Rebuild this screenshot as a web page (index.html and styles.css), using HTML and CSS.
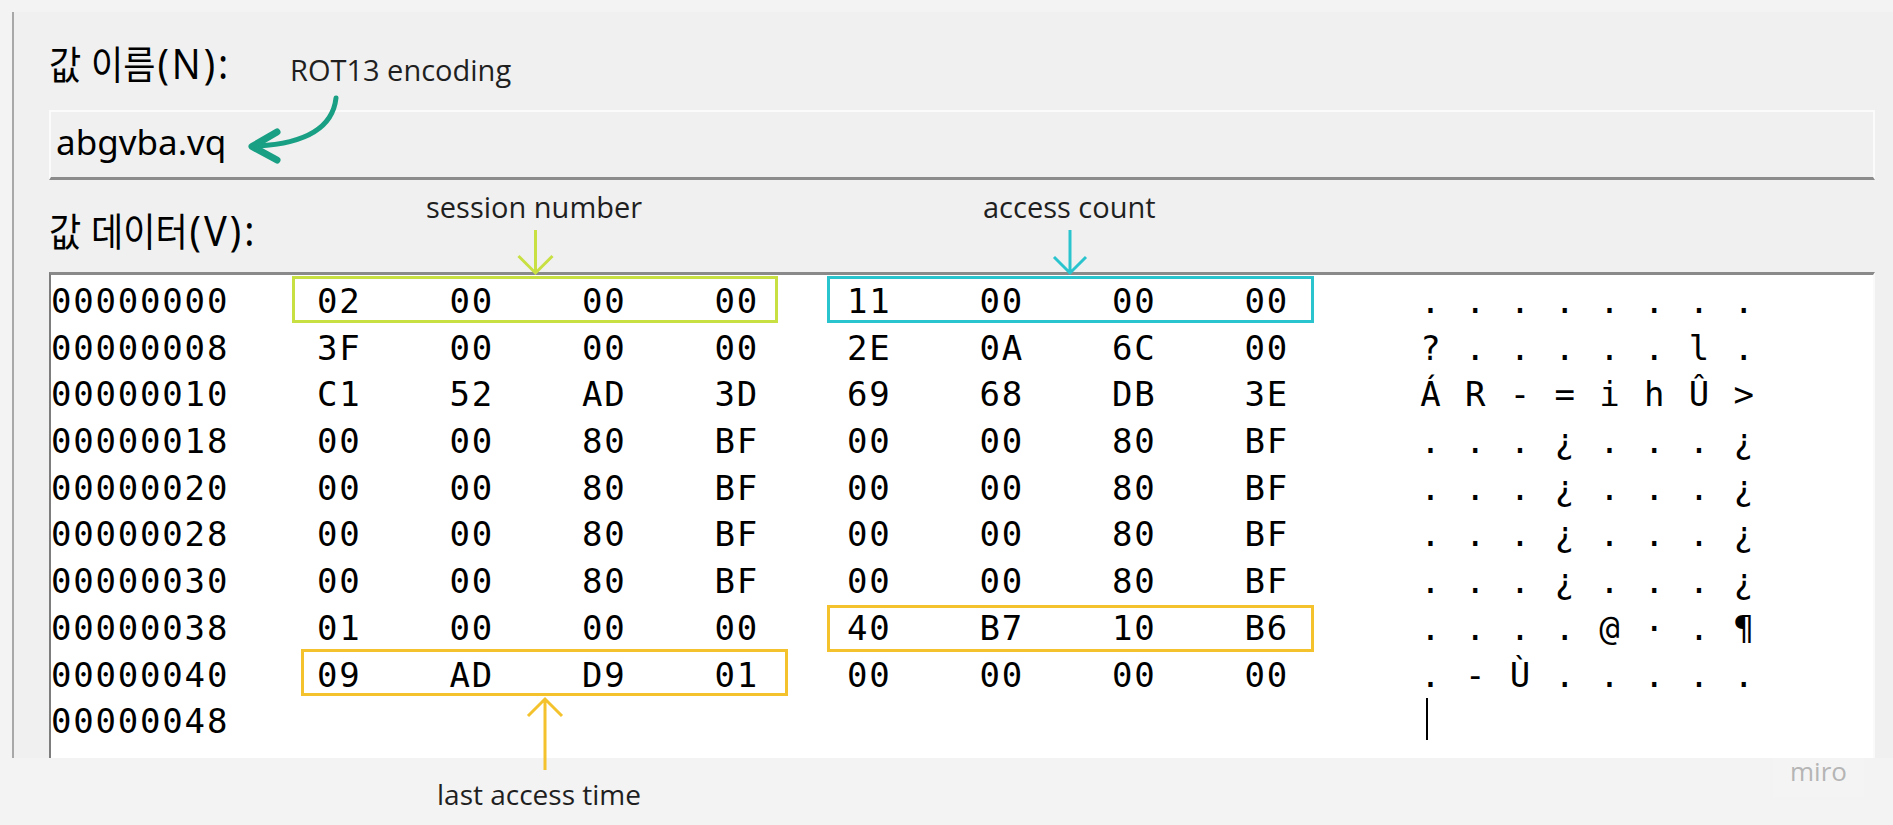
FILE: index.html
```html
<!DOCTYPE html>
<html lang="ko">
<head>
<meta charset="utf-8">
<title>Registry value</title>
<link rel="stylesheet" href="styles.css">
</head>
<body>
<div class="stage">
  <section class="dialog">
    <div class="label label-name">값 이름<span class="mn">(N):</span></div>
    <div class="namebox">abgvba.vq</div>
    <div class="label label-data">값 데이터<span class="mn">(V):</span></div>
    <div class="hexbox">
      <div class="row"><span class="off">00000000</span><span class="hx">02</span><span class="hx">00</span><span class="hx">00</span><span class="hx">00</span><span class="hx">11</span><span class="hx">00</span><span class="hx">00</span><span class="hx">00</span><span class="asc"><span>.</span><span>.</span><span>.</span><span>.</span><span>.</span><span>.</span><span>.</span><span>.</span></span></div>
      <div class="row"><span class="off">00000008</span><span class="hx">3F</span><span class="hx">00</span><span class="hx">00</span><span class="hx">00</span><span class="hx">2E</span><span class="hx">0A</span><span class="hx">6C</span><span class="hx">00</span><span class="asc"><span>?</span><span>.</span><span>.</span><span>.</span><span>.</span><span>.</span><span>l</span><span>.</span></span></div>
      <div class="row"><span class="off">00000010</span><span class="hx">C1</span><span class="hx">52</span><span class="hx">AD</span><span class="hx">3D</span><span class="hx">69</span><span class="hx">68</span><span class="hx">DB</span><span class="hx">3E</span><span class="asc"><span>Á</span><span>R</span><span>-</span><span>=</span><span>i</span><span>h</span><span>Û</span><span>&gt;</span></span></div>
      <div class="row"><span class="off">00000018</span><span class="hx">00</span><span class="hx">00</span><span class="hx">80</span><span class="hx">BF</span><span class="hx">00</span><span class="hx">00</span><span class="hx">80</span><span class="hx">BF</span><span class="asc"><span>.</span><span>.</span><span>.</span><span>¿</span><span>.</span><span>.</span><span>.</span><span>¿</span></span></div>
      <div class="row"><span class="off">00000020</span><span class="hx">00</span><span class="hx">00</span><span class="hx">80</span><span class="hx">BF</span><span class="hx">00</span><span class="hx">00</span><span class="hx">80</span><span class="hx">BF</span><span class="asc"><span>.</span><span>.</span><span>.</span><span>¿</span><span>.</span><span>.</span><span>.</span><span>¿</span></span></div>
      <div class="row"><span class="off">00000028</span><span class="hx">00</span><span class="hx">00</span><span class="hx">80</span><span class="hx">BF</span><span class="hx">00</span><span class="hx">00</span><span class="hx">80</span><span class="hx">BF</span><span class="asc"><span>.</span><span>.</span><span>.</span><span>¿</span><span>.</span><span>.</span><span>.</span><span>¿</span></span></div>
      <div class="row"><span class="off">00000030</span><span class="hx">00</span><span class="hx">00</span><span class="hx">80</span><span class="hx">BF</span><span class="hx">00</span><span class="hx">00</span><span class="hx">80</span><span class="hx">BF</span><span class="asc"><span>.</span><span>.</span><span>.</span><span>¿</span><span>.</span><span>.</span><span>.</span><span>¿</span></span></div>
      <div class="row"><span class="off">00000038</span><span class="hx">01</span><span class="hx">00</span><span class="hx">00</span><span class="hx">00</span><span class="hx">40</span><span class="hx">B7</span><span class="hx">10</span><span class="hx">B6</span><span class="asc"><span>.</span><span>.</span><span>.</span><span>.</span><span>@</span><span>·</span><span>.</span><span>¶</span></span></div>
      <div class="row"><span class="off">00000040</span><span class="hx">09</span><span class="hx">AD</span><span class="hx">D9</span><span class="hx">01</span><span class="hx">00</span><span class="hx">00</span><span class="hx">00</span><span class="hx">00</span><span class="asc"><span>.</span><span>-</span><span>Ù</span><span>.</span><span>.</span><span>.</span><span>.</span><span>.</span></span></div>
      <div class="row"><span class="off">00000048</span><span class="hx"></span><span class="hx"></span><span class="hx"></span><span class="hx"></span><span class="hx"></span><span class="hx"></span><span class="hx"></span><span class="hx"></span><span class="asc"><span class="caret"></span></span></div>
    </div>
  </section>

  <div class="mark mark-session"></div>
  <div class="mark mark-count"></div>
  <div class="mark mark-time1"></div>
  <div class="mark mark-time2"></div>

  <svg class="arrows" width="1893" height="825" viewBox="0 0 1893 825">
    <path class="a-teal" d="M336 98 C333 125 310 143 258 146"/>
    <path class="a-teal-head" d="M277 132 L252 146.5 L277 160"/>
    <path class="a-lime" d="M535.5 230 V271 M518.5 256 L535.5 273 L552.5 256"/>
    <path class="a-cyan" d="M1070 230 V271 M1054 257 L1070 273 L1086 257"/>
    <path class="a-yellow" d="M545 770 V701 M528 716 L545 699 L562 716"/>
  </svg>

  <div class="note note-rot">ROT13 encoding</div>
  <div class="note note-session">session number</div>
  <div class="note note-count">access count</div>
  <div class="note note-time">last access time</div>

  <div class="miro">miro</div>
</div>
</body>
</html>
```

FILE: styles.css
```css
* { box-sizing: border-box; }

html, body {
  margin: 0;
  padding: 0;
}

body {
  width: 1893px;
  height: 825px;
  overflow: hidden;
  background: #f3f3f3;
}

.stage {
  position: relative;
  width: 1893px;
  height: 825px;
  padding-top: 12px;
}

.dialog {
  margin-left: 12px;
  height: 746px;
  border-left: 2px solid #a8a8a8;
  background: #f0f0f0;
  padding: 0 18px 0 35px;
  overflow: hidden;
  display: flex;
  flex-direction: column;
}

.label {
  font-family: "Noto Sans CJK KR", "Noto Sans", sans-serif;
  font-size: 35px;
  line-height: 36px;
  height: 36px;
  color: #000;
  white-space: nowrap;
  transform: scaleY(1.1);
  transform-origin: 0 50%;
}

.label .mn {
  font-family: "Noto Sans", "Noto Sans CJK KR", sans-serif;
  font-size: 38px;
  letter-spacing: 3px;
  margin-left: 2px;
}

.label-name { margin-top: 33px; }
.label-data { margin-top: 31.5px; }

.namebox {
  margin-top: 29px;
  height: 70px;
  border: 2px solid #fbfbfb;
  border-bottom: 3px solid #8c8c8c;
  background: #f0f0f0;
  padding-left: 5px;
  font-family: "Noto Sans", sans-serif;
  font-size: 35px;
  line-height: 60px;
  color: #000;
}

.hexbox {
  margin-top: 24.5px;
  flex: 1;
  background: #fff;
  border-top: 3px solid #8a8a8a;
  border-left: 2px solid #7d7d7d;
  border-right: 2px solid #fafafa;
  padding-top: 3px;
  font-family: "DejaVu Sans Mono", "Liberation Mono", monospace;
  font-size: 34px;
  color: #000;
}

.row {
  display: flex;
  height: 46.7px;
  line-height: 46.7px;
  white-space: pre;
}

.off {
  width: 266px;
  letter-spacing: 1.8px;
}

.hx {
  width: 132.5px;
  letter-spacing: 1.8px;
}

.asc {
  display: flex;
  margin-left: 31.2px;
}

.asc span {
  width: 44.75px;
  text-align: center;
}

.asc .caret {
  width: 2px;
  height: 42px;
  margin-left: 17.4px;
  background: #000;
}

.mark {
  position: absolute;
  border: 3px solid;
}

.mark-session { left: 292px; top: 276px; width: 486px; height: 47px; border-color: #c9e043; }
.mark-count   { left: 827px; top: 276px; width: 487px; height: 47px; border-color: #2ac4ce; }
.mark-time1   { left: 827px; top: 605px; width: 487px; height: 47px; border-color: #f4c22c; }
.mark-time2   { left: 301px; top: 649px; width: 487px; height: 47px; border-color: #f4c22c; }

.arrows {
  position: absolute;
  left: 0;
  top: 0;
  pointer-events: none;
}

.arrows path { fill: none; }
.a-teal { stroke: #19a084; stroke-width: 5; stroke-linecap: round; }
.a-teal-head { stroke: #19a084; stroke-width: 7; stroke-linecap: round; stroke-linejoin: round; }
.a-lime { stroke: #c9e043; stroke-width: 3; }
.a-cyan { stroke: #2ac4ce; stroke-width: 3; }
.a-yellow { stroke: #f4c22c; stroke-width: 3; }

.note {
  position: absolute;
  font-family: "Open Sans", sans-serif;
  font-size: 29px;
  line-height: 29px;
  color: #1f1f1f;
  white-space: nowrap;
}

.note-rot { left: 290px; top: 55px; }
.note-session { left: 426px; top: 192px; }
.note-count { left: 983px; top: 192px; }
.note-time { left: 437px; top: 780px; font-size: 28px; line-height: 28px; }

.miro {
  position: absolute;
  left: 1773px;
  top: 758px;
  width: 91px;
  height: 39px;
  background: #f4f4f4;
  font-family: "Open Sans", sans-serif;
  font-size: 26px;
  line-height: 26px;
  color: #b5b5b5;
  text-align: center;
}
```
